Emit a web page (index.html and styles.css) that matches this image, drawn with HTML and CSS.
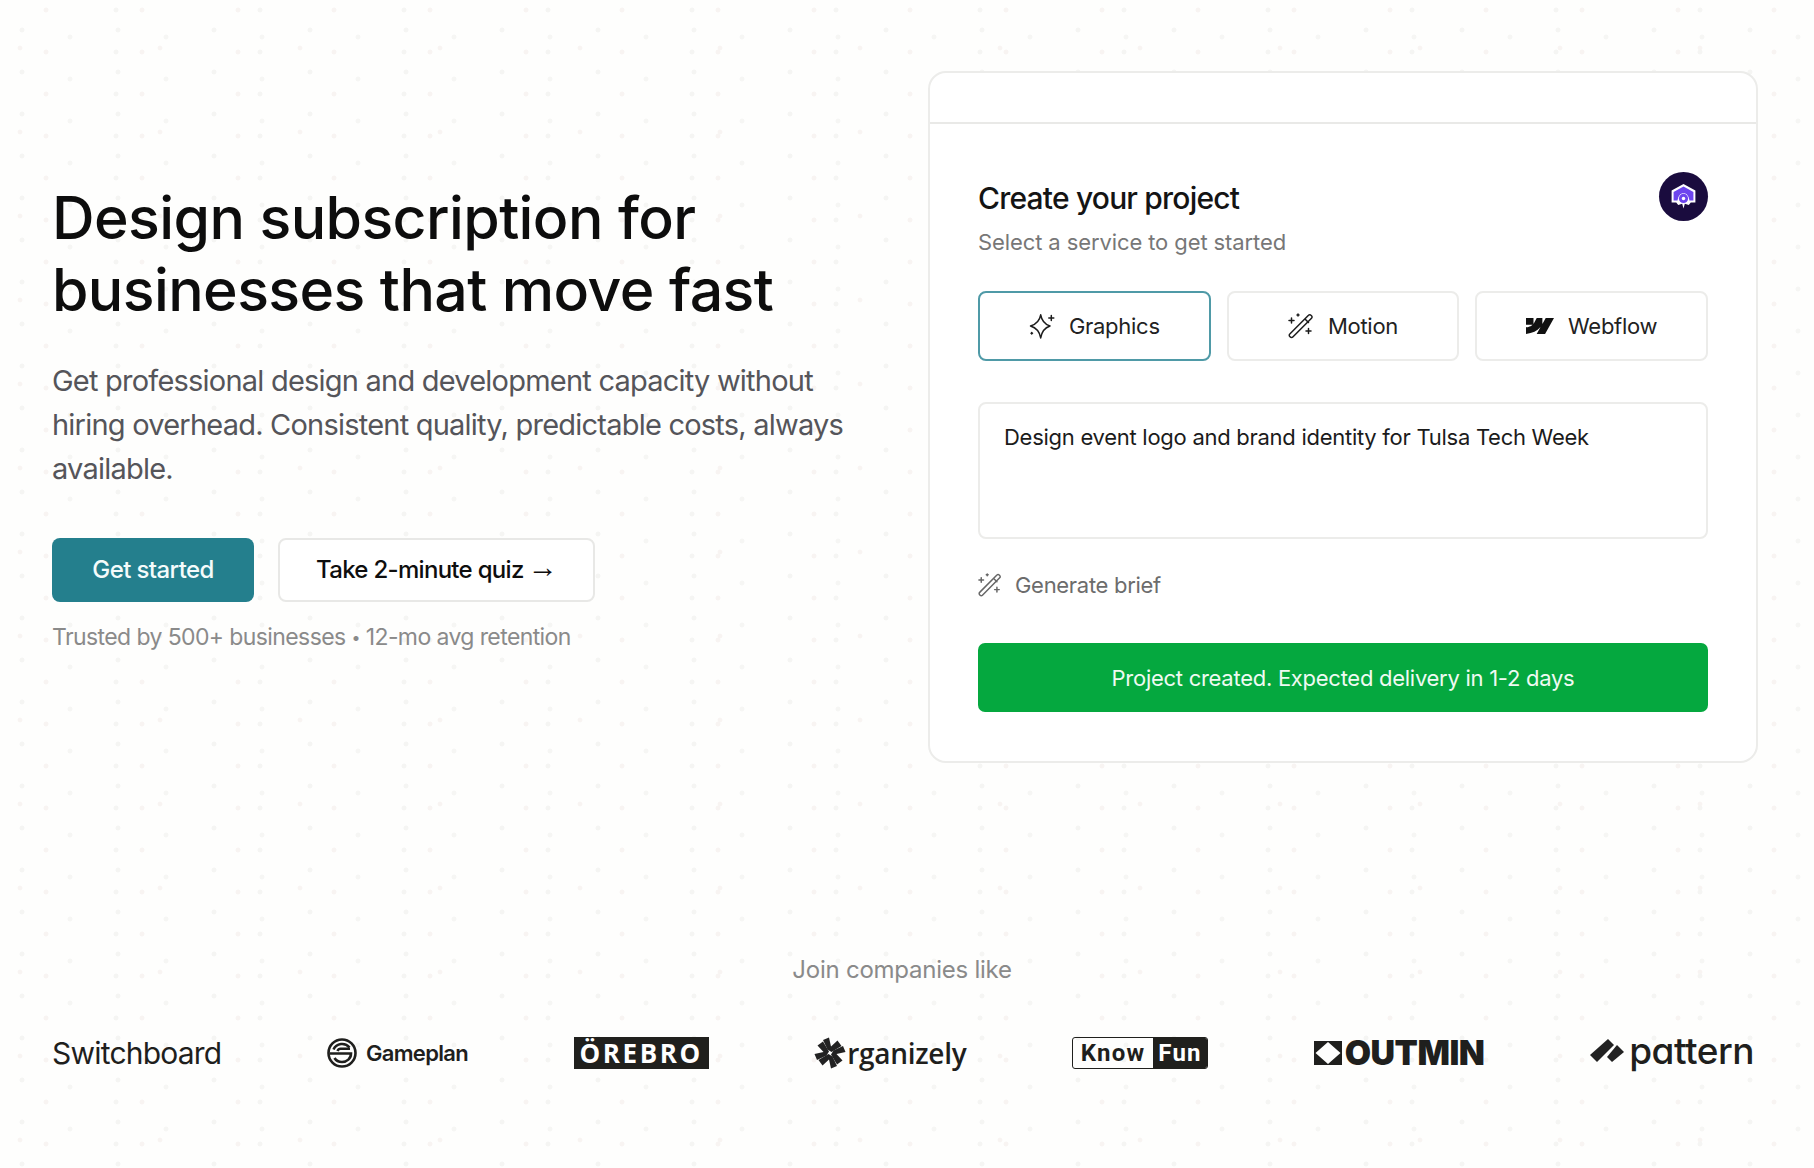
FILE: index.html
```html
<!DOCTYPE html>
<html lang="en">
<head>
<meta charset="utf-8">
<title>Design subscription</title>
<link rel="stylesheet" href="styles.css">
</head>
<body>
<main class="page">
  <section class="hero">
    <div class="intro">
      <h1 class="headline">Design subscription for<br>businesses that move fast</h1>
      <p class="lead">Get professional design and development capacity without hiring overhead. Consistent quality, predictable costs, always available.</p>
      <div class="actions">
        <a class="btn btn-primary">Get started</a>
        <a class="btn btn-outline">Take 2-minute quiz <span class="arrow">→</span></a>
      </div>
      <p class="trust">Trusted by 500+ businesses <span class="bullet">•</span> 12-mo avg retention</p>
    </div>
    <div class="card">
      <div class="card-top"></div>
      <div class="card-body">
        <div class="card-head">
          <div>
            <h2 class="card-title">Create your project</h2>
            <p class="card-sub">Select a service to get started</p>
          </div>
          <div class="avatar">
            <svg viewBox="0 0 28 28" width="37" height="37">
              <path d="M14 4.500 23 9.500V18.500H19.500L18 20.500 15 19.500 14 23 13 19.500 10 20.500 8.500 18.500H5V9.500Z" fill="#fff"/>
              <path d="M14 6.500 21.500 10.500V17H18.500C18 13.500 16.500 11.500 14 11.500S10 13.500 9.500 17H6.500V10.500Z" fill="#6d45ee"/>
              <circle cx="14" cy="15.500" r="3.500" fill="#6d45ee"/>
              <circle cx="14" cy="15.500" r="1.300" fill="#fff"/>
            </svg>
          </div>
        </div>
        <div class="tabs">
          <button class="tab tab-active">
            <svg class="icon" viewBox="0 0 26 26" fill="none" stroke="#1c1c1c" stroke-width="1.500" stroke-linecap="round" stroke-linejoin="round">
              <path d="M11.700 1.800C12.700 7.500 15 11 21 13 15 15 12.700 18.500 11.700 25 10.700 18.500 8 15 1.500 13 8 11 10.700 7.500 11.700 1.800Z"/>
              <path d="M22.300 2.500V7.500M19.800 5H24.800"/>
              <path d="M2.700 19.500V21M2 20.300H3.500"/>
            </svg>
            <span>Graphics</span>
          </button>
          <button class="tab">
            <svg class="icon" viewBox="0 0 26 26" fill="none" stroke="#1c1c1c" stroke-width="1.500" stroke-linecap="round" stroke-linejoin="round">
              <path d="M1.800 22 20.500 3.200A1.700 1.700 0 0 1 23 3.200L23.500 3.700A1.700 1.700 0 0 1 23.500 6.200L4.800 25A1.700 1.700 0 0 1 2.300 25L1.800 24.500A1.700 1.700 0 0 1 1.800 22Z" transform="translate(0 -1)"/>
              <path d="M17.500 6.500 20.500 9.500"/>
              <path d="M3.500 5V10M1 7.500H6"/>
              <path d="M10 1V3M9 2H11"/>
              <path d="M20.500 15.500V20.500M18 18H23"/>
            </svg>
            <span>Motion</span>
          </button>
          <button class="tab">
            <svg class="icon-webflow" viewBox="0 3.500 24 17" fill="#111" preserveAspectRatio="none">
              <path d="M24 4.515 16.342 19.485H9.149L12.354 13.281H12.210C9.566 16.713 5.621 18.973 0 19.485V13.367S3.596 13.154 5.710 10.932H0V4.515H6.417V9.793L6.561 9.792 9.183 4.515H14.037V9.759L14.181 9.758 16.903 4.515Z"/>
            </svg>
            <span>Webflow</span>
          </button>
        </div>
        <div class="field">Design event logo and brand identity for Tulsa Tech Week</div>
        <div class="generate">
          <svg class="icon-small" viewBox="0 0 26 26" fill="none" stroke="#666" stroke-width="1.600" stroke-linecap="round" stroke-linejoin="round">
            <path d="M1.800 22 20.500 3.200A1.700 1.700 0 0 1 23 3.200L23.500 3.700A1.700 1.700 0 0 1 23.500 6.200L4.800 25A1.700 1.700 0 0 1 2.300 25L1.800 24.500A1.700 1.700 0 0 1 1.800 22Z" transform="translate(0 -1)"/>
            <path d="M17.500 6.500 20.500 9.500"/>
            <path d="M3.500 5V10M1 7.500H6"/>
            <path d="M10 1V3M9 2H11"/>
            <path d="M20.500 15.500V20.500M18 18H23"/>
          </svg>
          <span>Generate brief</span>
        </div>
        <div class="success">Project created. Expected delivery in 1-2 days</div>
      </div>
    </div>
  </section>
  <section class="clients">
    <p class="clients-title">Join companies like</p>
    <div class="logos">
      <span class="logo logo-switch">Switchboard</span>
      <span class="logo logo-game">
        <svg viewBox="0 0 30 30" width="30" height="30" fill="none" stroke="#1f1f1d" stroke-width="2.600">
          <circle cx="15" cy="15" r="13.500"/>
          <path d="M22.500 9.500A9.500 9.500 0 0 0 6.500 11.500"/>
          <path d="M2.500 15.500H24C24 20.500 20 24 15 24 11.500 24 9 22.500 7.500 20"/>
          <path d="M23 10.800H13.500C12 10.800 11 11.800 10.500 13"/>
        </svg>
        <span>Gameplan</span>
      </span>
      <span class="logo logo-orebro">ÖREBRO</span>
      <span class="logo logo-org">
        <svg class="org-mark" viewBox="0 0 32 32" width="32" height="32" fill="#222">
          <path d="M9 3 15 0.500 17 9.500 23.500 3.500 27.500 9 17.500 15 13.500 12.500Z"/>
          <path d="M9 3 15 0.500 17 9.500 23.500 3.500 27.500 9 17.500 15 13.500 12.500Z" transform="rotate(90 16 16)"/>
          <path d="M9 3 15 0.500 17 9.500 23.500 3.500 27.500 9 17.500 15 13.500 12.500Z" transform="rotate(180 16 16)"/>
          <path d="M9 3 15 0.500 17 9.500 23.500 3.500 27.500 9 17.500 15 13.500 12.500Z" transform="rotate(270 16 16)"/>
        </svg>
        <span>rganizely</span>
      </span>
      <span class="logo logo-know"><span class="know-left">Know</span><span class="know-right">Fun</span></span>
      <span class="logo logo-outmin">
        <svg viewBox="0 0 28 24" width="28" height="24">
          <path fill-rule="evenodd" d="M0 0H28V24H0ZM14 1 1.500 12 14 23 26.500 12Z" fill="#1f1f1d"/>
        </svg>
        <span>OUTMIN</span>
      </span>
      <span class="logo logo-pattern">
        <svg viewBox="0 0 34 24" width="34" height="24" fill="#222">
          <path d="M0 16 18 0 24 6 7 23Z"/>
          <path d="M17 18 27 6 34 13 22 23Z"/>
        </svg>
        <span>pattern</span>
      </span>
    </div>
  </section>
</main>
</body>
</html>
```
FILE: styles.css
```css
* { box-sizing: border-box; }
html, body { margin: 0; padding: 0; }
body {
  min-height: 1168px;
  font-family: Inter, "Liberation Sans", sans-serif;
  color: #111;
  background-color: #fefefd;
  background-image:
    radial-gradient(circle, #f5f5f3 2.100px, transparent 2.800px),
    radial-gradient(circle, #f6f6f4 2.100px, transparent 2.800px),
    radial-gradient(circle, #f8f4f2 2.100px, transparent 2.800px),
    radial-gradient(circle, #f5f5f3 2.100px, transparent 2.800px),
    radial-gradient(circle, #f8f4f2 2px, transparent 2.700px);
  background-size: 96px 42px, 96px 42px, 96px 42px, 144px 42px, 140px 84px;
  background-position: -26px 9px, 22px 16px, -2px -11px, 44px -11px, 90px 6px;
}
.page { width: 1814px; overflow: hidden; }

.hero {
  display: grid;
  grid-template-columns: 876px 830px;
  align-items: center;
  padding: 71px 0 0 52px;
}
.intro { margin-bottom: 3px; padding-top: 1px; }
.headline {
  margin: 0;
  font-size: 59px;
  line-height: 72px;
  font-weight: 500;
  letter-spacing: -0.6px;
  color: #0d0d0d;
}
.lead {
  margin: 33px 0 0;
  width: 800px;
  font-size: 29px;
  line-height: 44px;
  letter-spacing: -0.78px;
  color: #55555a;
}
.actions {
  display: flex;
  gap: 24px;
  margin-top: 47px;
}
.btn {
  display: flex;
  align-items: center;
  justify-content: center;
  height: 64px;
  border-radius: 8px;
  font-size: 24px;
  font-weight: 500;
}
.btn-primary {
  width: 202px;
  background: #247f8d;
  color: #f4fbfb;
  letter-spacing: -0.6px;
}
.btn-outline {
  width: 317px;
  background: #fff;
  border: 2px solid #e8e8e6;
  color: #0e0e0e;
  letter-spacing: -0.7px;
}
.arrow {
  margin: 0 0 5px 4px;
  font-family: "Liberation Sans", sans-serif;
  font-size: 30px;
  line-height: 1;
  font-weight: 400;
}
.trust {
  margin: 21px 0 0;
  font-size: 23px;
  line-height: 28px;
  letter-spacing: -0.6px;
  color: #8a8a8a;
}
.bullet { font-size: 16px; vertical-align: 2px; }

.card {
  background: #fff;
  border: 2px solid #ececea;
  border-radius: 18px;
}
.card-top {
  height: 51px;
  border-bottom: 2px solid #e9e9e7;
}
.card-body { padding: 48px 48px 49px; }
.card-head {
  display: flex;
  justify-content: space-between;
  align-items: flex-start;
}
.card-title {
  margin: 6px 0 0;
  font-size: 30px;
  line-height: 40px;
  font-weight: 500;
  letter-spacing: -0.8px;
  color: #141414;
}
.card-sub {
  margin: 10px 0 0;
  font-size: 22px;
  line-height: 28px;
  letter-spacing: -0.1px;
  color: #777;
}
.avatar {
  display: flex;
  align-items: center;
  justify-content: center;
  width: 49px;
  height: 49px;
  border-radius: 50%;
  background: #1a0c3e;
}
.tabs {
  display: grid;
  grid-template-columns: repeat(3, 1fr);
  gap: 16px;
  margin-top: 35px;
}
.tab {
  display: flex;
  align-items: center;
  justify-content: center;
  gap: 14px;
  height: 70px;
  background: #fff;
  border: 2px solid #ececea;
  border-radius: 8px;
  font: 400 22px Inter, "Liberation Sans", sans-serif;
  letter-spacing: -0.27px;
  color: #222;
  padding: 0;
}
.tab-active { border-color: #4f9aa7; }
.icon { width: 26px; height: 26px; }
.icon-webflow { width: 28px; height: 18px; }
.icon-small { width: 24px; height: 24px; }
.field {
  height: 137px;
  margin-top: 41px;
  padding: 17px 24px;
  background: #fff;
  border: 2px solid #ececea;
  border-radius: 8px;
  font-size: 22px;
  line-height: 32px;
  letter-spacing: -0.27px;
  color: #1b1b1b;
}
.generate {
  display: flex;
  align-items: center;
  gap: 13px;
  height: 28px;
  margin-top: 32px;
  font-size: 22px;
  letter-spacing: -0.3px;
  color: #6c6c6c;
}
.success {
  display: flex;
  align-items: center;
  justify-content: center;
  height: 69px;
  margin-top: 44px;
  background: #05a83f;
  border-radius: 7px;
  font-size: 22px;
  letter-spacing: -0.27px;
  color: #effaf2;
}

.clients { margin-top: 193px; padding: 0 60px 0 52px; }
.clients-title {
  margin: 0;
  padding-right: 2px;
  text-align: center;
  font-size: 24px;
  line-height: 28px;
  letter-spacing: -0.25px;
  color: #8a8a8a;
}
.logos {
  display: flex;
  justify-content: space-between;
  align-items: center;
  height: 44px;
  margin-top: 47px;
}
.logo { display: inline-flex; align-items: center; color: #1f1f1d; white-space: nowrap; line-height: 44px; }
.logo-switch { font-size: 30px; font-weight: 400; letter-spacing: -0.8px; }
.logo-game { gap: 9px; font-size: 22px; font-weight: 600; letter-spacing: -0.7px; }
.logo-orebro {
  justify-content: center;
  width: 135px;
  height: 32px;
  background: #20201d;
  color: #fff;
  font: 700 26px/32px "Open Sans", sans-serif;
  letter-spacing: 2.600px;
}
.logo-org { font: 600 28px/44px "Open Sans", sans-serif; letter-spacing: -0.3px; }
.org-mark { margin-right: 1px; }
.logo-know {
  width: 136px;
  height: 32px;
  border: 1px solid #20201d;
  border-radius: 3px;
  font: 700 24px/30px Roboto, sans-serif;
  letter-spacing: 1.200px;
}
.know-left { flex: 1; text-align: center; }
.know-right {
  display: flex;
  align-items: center;
  justify-content: center;
  width: 54px;
  height: 100%;
  background: #20201d;
  color: #fff;
  border-radius: 0 2px 2px 0;
}
.logo-outmin { gap: 3px; font-size: 34px; font-weight: 900; letter-spacing: -0.5px; }
.logo-pattern { gap: 5px; font-size: 37px; font-weight: 500; letter-spacing: -0.5px; font-feature-settings: "cv11"; margin-top: -4px; }
```
